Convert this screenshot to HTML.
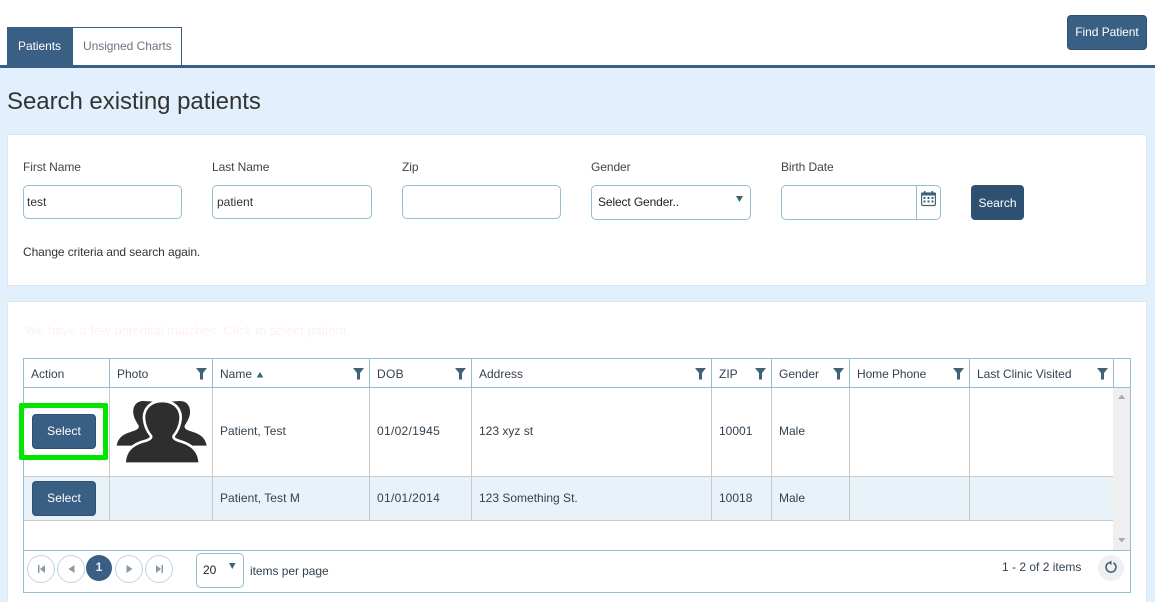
<!DOCTYPE html>
<html><head><meta charset="utf-8">
<style>
html,body{margin:0;padding:0;overflow:hidden;height:602px}
body{width:1155px;height:602px;position:relative;overflow:hidden;background:#e2f0fe;font-family:"Liberation Sans",sans-serif;font-size:12px;color:#33424f}
.a,.t,.box,.btn{position:absolute;box-sizing:border-box}
.t{white-space:nowrap;line-height:14px;height:14px}
.box{border:1px solid #93bfcf;border-radius:5px;background:#fff}
.btn{background:#3a5f85;border:1px solid #2f4f70;border-radius:4px;color:#fff;text-align:center;font-weight:normal}
.vl{position:absolute;width:1px}
.hl{position:absolute;height:1px}
.lab{color:#444;letter-spacing:-.08px}
.pg{position:absolute;width:28px;height:28px;border:1px solid #bdd7e2;border-radius:50%;box-sizing:border-box;top:555px;background:#fff}
svg{position:absolute;display:block}
</style></head>
<body>
<div class="a" style="left:0;top:0;width:1155px;height:65px;background:#fff"></div>
<div class="a" style="left:0;top:65px;width:1155px;height:3px;background:#3a5f85"></div>
<div class="a" style="left:7px;top:27px;width:66px;height:38px;background:#3a5f85"></div>
<div class="a" style="left:73px;top:27px;width:109px;height:38px;background:#fff;border:1px solid #3a5f85;border-left:0;border-bottom:0"></div>
<div class="t" style="left:18px;top:39px;color:#fff;font-size:12px;letter-spacing:-.05px">Patients</div>
<div class="t" style="left:83px;top:39px;color:#6a7384;font-size:12px;letter-spacing:-.05px">Unsigned Charts</div>
<div class="btn" style="left:1067px;top:15px;width:80px;height:35px;line-height:32px;letter-spacing:-.05px">Find Patient</div>
<div class="t" style="left:7px;top:88px;height:28px;line-height:28px;font-size:24px;color:#333;letter-spacing:-.04px">Search existing patients</div>

<div class="a" style="left:7px;top:134px;width:1140px;height:152px;background:#fff;border:1px solid #dfe6ea"></div>
<div class="t lab" style="left:23px;top:160px">First Name</div>
<div class="t lab" style="left:212px;top:160px">Last Name</div>
<div class="t lab" style="left:402px;top:160px">Zip</div>
<div class="t lab" style="left:591px;top:160px">Gender</div>
<div class="t lab" style="left:781px;top:160px">Birth Date</div>
<div class="box" style="left:23px;top:185px;width:159px;height:34px"></div>
<div class="t" style="left:27px;top:195px;color:#333">test</div>
<div class="box" style="left:212px;top:185px;width:160px;height:34px"></div>
<div class="t" style="left:217px;top:195px;color:#333">patient</div>
<div class="box" style="left:402px;top:185px;width:159px;height:34px"></div>
<div class="box" style="left:591px;top:185px;width:160px;height:35px"></div>
<div class="t" style="left:598px;top:195px;color:#222;letter-spacing:-.12px">Select Gender..</div>
<svg style="left:735px;top:195px" width="9" height="8"><path d="M1 1h7L4.500 7z" fill="#3f6274"/></svg>
<div class="box" style="left:781px;top:185px;width:160px;height:35px"></div>
<div class="vl" style="left:916px;top:186px;height:33px;background:#93bfcf"></div>
<svg style="left:921px;top:190px" width="15" height="17" viewBox="0 0 15 17"><path d="M1.500 3h12a1 1 0 0 1 1 1v10a1.500 1.500 0 0 1-1.500 1.500H2A1.500 1.500 0 0 1 .5 14V4a1 1 0 0 1 1-1z" fill="none" stroke="#3f6274" stroke-width="1.300"/><path d="M.5 3h14v2.500H.5z" fill="#3f6274"/><path d="M3 1h1.500v3H3zM10.500 1H12v3h-1.500z" fill="#3f6274"/><path d="M2.500 7h2v2h-2zM6.500 7h2v2h-2zM10.500 7h2v2h-2zM2.500 10.500h2v2h-2zM6.500 10.500h2v2h-2zM10.500 10.500h2v2h-2z" fill="#3f6274"/></svg>
<div class="btn" style="left:971px;top:185px;width:53px;height:35px;background:#2f5171;line-height:34px;border-color:#2f5171">Search</div>
<div class="t" style="left:23px;top:245px;color:#333;letter-spacing:-.09px">Change criteria and search again.</div>

<div class="a" style="left:7px;top:301px;width:1140px;height:301px;background:#fff;border:1px solid #dfe6ea;border-bottom:0"></div>
<div class="t" style="left:25px;top:324px;color:#fdf0f2;font-size:13px">We have a few potential matches. Click to select patient.</div>

<!-- grid -->
<div class="a" style="left:23px;top:358px;width:1108px;height:235px;border:1px solid #93bfcf;background:#fff"></div>
<div class="a" style="left:24px;top:477px;width:1089px;height:43px;background:#e9f2f8"></div>
<div class="a" style="left:1113px;top:388px;width:17px;height:162px;background:#efefef"></div>
<svg style="left:1117px;top:393px" width="10" height="7"><path d="M1 6h7.500L4.700 1.500z" fill="#aaa"/></svg>
<svg style="left:1117px;top:537px" width="10" height="7"><path d="M1 1h7.500L4.700 5.500z" fill="#aaa"/></svg>
<div class="hl" style="left:24px;top:387px;width:1106px;background:#93bfcf"></div>
<div class="hl" style="left:24px;top:476px;width:1089px;background:#c9c9c9"></div>
<div class="hl" style="left:24px;top:520px;width:1089px;background:#c9c9c9"></div>
<div class="hl" style="left:24px;top:550px;width:1106px;background:#93bfcf"></div>

<div class="vl" style="left:109px;top:359px;height:28px;background:#93bfcf"></div>
<div class="vl" style="left:212px;top:359px;height:28px;background:#93bfcf"></div>
<div class="vl" style="left:369px;top:359px;height:28px;background:#93bfcf"></div>
<div class="vl" style="left:471px;top:359px;height:28px;background:#93bfcf"></div>
<div class="vl" style="left:711px;top:359px;height:28px;background:#93bfcf"></div>
<div class="vl" style="left:771px;top:359px;height:28px;background:#93bfcf"></div>
<div class="vl" style="left:849px;top:359px;height:28px;background:#93bfcf"></div>
<div class="vl" style="left:969px;top:359px;height:28px;background:#93bfcf"></div>
<div class="vl" style="left:1113px;top:359px;height:28px;background:#93bfcf"></div>

<div class="vl" style="left:109px;top:388px;height:132px;background:#c9c9c9"></div>
<div class="vl" style="left:212px;top:388px;height:132px;background:#c9c9c9"></div>
<div class="vl" style="left:369px;top:388px;height:132px;background:#c9c9c9"></div>
<div class="vl" style="left:471px;top:388px;height:132px;background:#c9c9c9"></div>
<div class="vl" style="left:711px;top:388px;height:132px;background:#c9c9c9"></div>
<div class="vl" style="left:771px;top:388px;height:132px;background:#c9c9c9"></div>
<div class="vl" style="left:849px;top:388px;height:132px;background:#c9c9c9"></div>
<div class="vl" style="left:969px;top:388px;height:132px;background:#c9c9c9"></div>

<div class="t" style="left:31px;top:367px">Action</div>
<div class="t" style="left:117px;top:367px">Photo</div>
<div class="t" style="left:220px;top:367px">Name</div>
<svg style="left:256px;top:371px" width="8" height="7"><path d="M.7 6.500h6.600L4 1z" fill="#3f6274"/></svg>
<div class="t" style="left:377px;top:367px;letter-spacing:.3px">DOB</div>
<div class="t" style="left:479px;top:367px">Address</div>
<div class="t" style="left:719px;top:367px">ZIP</div>
<div class="t" style="left:779px;top:367px">Gender</div>
<div class="t" style="left:857px;top:367px;letter-spacing:-.08px">Home Phone</div>
<div class="t" style="left:977px;top:367px">Last Clinic Visited</div>

<svg style="left:195.500px;top:368px" width="11" height="12"><path d="M0 0h11L7 5v6.500H4V5z" fill="#3f6274"/></svg>
<svg style="left:352.500px;top:368px" width="11" height="12"><path d="M0 0h11L7 5v6.500H4V5z" fill="#3f6274"/></svg>
<svg style="left:454.500px;top:368px" width="11" height="12"><path d="M0 0h11L7 5v6.500H4V5z" fill="#3f6274"/></svg>
<svg style="left:694.500px;top:368px" width="11" height="12"><path d="M0 0h11L7 5v6.500H4V5z" fill="#3f6274"/></svg>
<svg style="left:754.500px;top:368px" width="11" height="12"><path d="M0 0h11L7 5v6.500H4V5z" fill="#3f6274"/></svg>
<svg style="left:832.500px;top:368px" width="11" height="12"><path d="M0 0h11L7 5v6.500H4V5z" fill="#3f6274"/></svg>
<svg style="left:952.500px;top:368px" width="11" height="12"><path d="M0 0h11L7 5v6.500H4V5z" fill="#3f6274"/></svg>
<svg style="left:1096.500px;top:368px" width="11" height="12"><path d="M0 0h11L7 5v6.500H4V5z" fill="#3f6274"/></svg>

<!-- row 1 -->
<div class="a" style="left:19px;top:403px;width:89px;height:57px;border:5px solid #00e600;border-radius:2px"></div>
<div class="btn" style="left:32px;top:414px;width:64px;height:35px;line-height:32px;letter-spacing:.05px">Select</div>
<svg style="left:100px;top:385px" width="120" height="90" viewBox="0 0 360 270">
<path d="M130 48C108 48 98 65 100 85C102 100 110 112 116 122C118 130 112 134 100 138C80 145 56 150 50 182L140 182L180 100L160 50Z" fill="#2e2e2e"/>
<path d="M240 48C262 48 272 65 270 85C268 100 260 112 254 122C252 130 258 134 270 138C290 145 314 150 320 182L230 182L190 100L210 50Z" fill="#2e2e2e"/>
<path d="M187 52C155 52 135 72 136 100C138 125 148 140 156 150C162 160 150 168 135 172C105 180 80 195 78 232L295 232C293 195 266 180 238 172C224 168 212 160 218 150C226 140 236 125 238 100C239 72 219 52 187 52Z" fill="#2e2e2e" stroke="#fff" stroke-width="16" paint-order="stroke"/>
</svg>
<div class="t" style="left:220px;top:424px">Patient, Test</div>
<div class="t" style="left:377px;top:424px;letter-spacing:.3px">01/02/1945</div>
<div class="t" style="left:479px;top:424px">123 xyz st</div>
<div class="t" style="left:719px;top:424px">10001</div>
<div class="t" style="left:779px;top:424px">Male</div>

<!-- row 2 -->
<div class="btn" style="left:32px;top:481px;width:64px;height:35px;line-height:32px;letter-spacing:.05px">Select</div>
<div class="t" style="left:220px;top:491px;letter-spacing:.05px">Patient, Test M</div>
<div class="t" style="left:377px;top:491px;letter-spacing:.3px">01/01/2014</div>
<div class="t" style="left:479px;top:491px">123 Something St.</div>
<div class="t" style="left:719px;top:491px">10018</div>
<div class="t" style="left:779px;top:491px">Male</div>

<!-- pager -->
<div class="pg" style="left:27px"></div>
<div class="pg" style="left:57px"></div>
<div class="a" style="left:86px;top:555px;width:26px;height:26px;border-radius:50%;background:#3a5f85"></div>
<div class="t" style="left:86px;top:560px;width:26px;text-align:center;color:#e8f0f5;font-weight:bold">1</div>
<div class="pg" style="left:115px"></div>
<div class="pg" style="left:145px"></div>
<svg style="left:37px;top:564px" width="9" height="10"><path d="M1 1h1.500v8H1zM8 1v8L3 5z" fill="#8a9aa5"/></svg>
<svg style="left:67px;top:564px" width="9" height="10"><path d="M7.500 1v8L1.500 5z" fill="#8a9aa5"/></svg>
<svg style="left:125px;top:564px" width="9" height="10"><path d="M1.500 1v8l6-4z" fill="#8a9aa5"/></svg>
<svg style="left:155px;top:564px" width="9" height="10"><path d="M1 1v8l5-4zM6.500 1H8v8H6.500z" fill="#8a9aa5"/></svg>
<div class="box" style="left:196px;top:553px;width:48px;height:35px"></div>
<div class="t" style="left:203px;top:563px;color:#222">20</div>
<svg style="left:228px;top:562px" width="9" height="8"><path d="M1 1h6.500L4.300 7z" fill="#3f6274"/></svg>
<div class="t" style="left:250px;top:564px;letter-spacing:-.05px">items per page</div>
<div class="t" style="left:1002px;top:560px">1 - 2 of 2 items</div>
<div class="a" style="left:1098px;top:555px;width:26px;height:26px;border-radius:50%;background:#f0f0f0"></div>
<svg style="left:1104px;top:560px" width="14" height="14" viewBox="0 0 14 14"><path d="M4.500 2.800a5 5 0 1 0 5 0" fill="none" stroke="#3f6274" stroke-width="1.500"/><path d="M7.500 .5v4.500l-3.500-2.200z" fill="#3f6274"/></svg>
</body></html>
